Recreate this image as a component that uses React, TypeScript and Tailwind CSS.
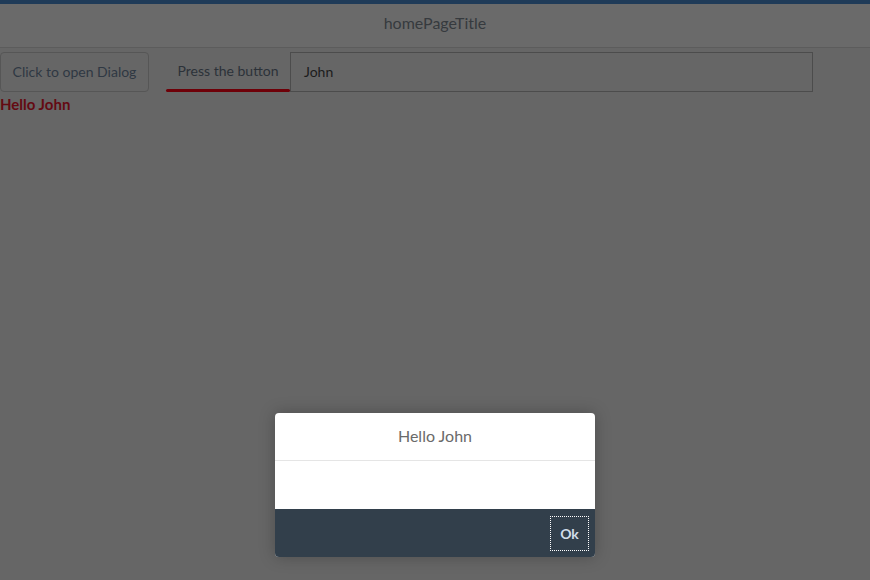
export default function App() {
  return (
    <div className="relative h-[580px] w-[870px] overflow-hidden bg-[#666666] font-['Lato',sans-serif]">
      <div className="h-[4px] bg-[#1f3b58]" />
      <header className="flex h-[44px] items-center justify-center border-b border-[#5c5c5c] bg-[#6a6a6a] pb-[6px]">
        <span className="text-[16px] text-[#363a3e]">homePageTitle</span>
      </header>

      <div className="mt-[4px] flex items-center">
        <button className="h-[40px] w-[149px] rounded-[4px] border border-[#565656] pb-[2px] text-[14px] text-[#2f3843]">
          Click to open Dialog
        </button>
        <button className="relative ml-[17px] h-[40px] w-[124px] pb-[3px] text-[14px] text-[#2c3239]">
          <span>Press the button</span>
          <span className="absolute bottom-0 left-0 right-0 h-[3px] rounded-full bg-[#6e0008]" />
        </button>
        <div className="flex h-[40px] w-[523px] items-center border border-[#4c4c4c] px-[13px] pb-[2px] text-[14px] text-[#1c1c1c]">
          John
        </div>
      </div>
      <div className="mt-[1px] text-[15px] font-bold text-[#640a12]">Hello John</div>

      {/* dialog sits on the block layer */}
      <div className="absolute left-[275px] top-[413px] w-[320px] overflow-hidden rounded-[4px] bg-white shadow-[0_0_16px_rgba(0,0,0,0.25)]">
        <div className="flex h-[48px] items-center justify-center border-b border-[#e5e5e5] pb-[2px] text-[16px] text-[#6a6a6a]">
          Hello John
        </div>
        <div className="h-[48px]" />
        <div className="flex h-[48px] items-center justify-end bg-[#323f4b] pr-[6px]">
          <button className="flex h-[35px] w-[39px] items-center justify-center border border-dotted border-white text-[14px] font-bold text-[#d1dde9]">
            Ok
          </button>
        </div>
      </div>
    </div>
  );
}
